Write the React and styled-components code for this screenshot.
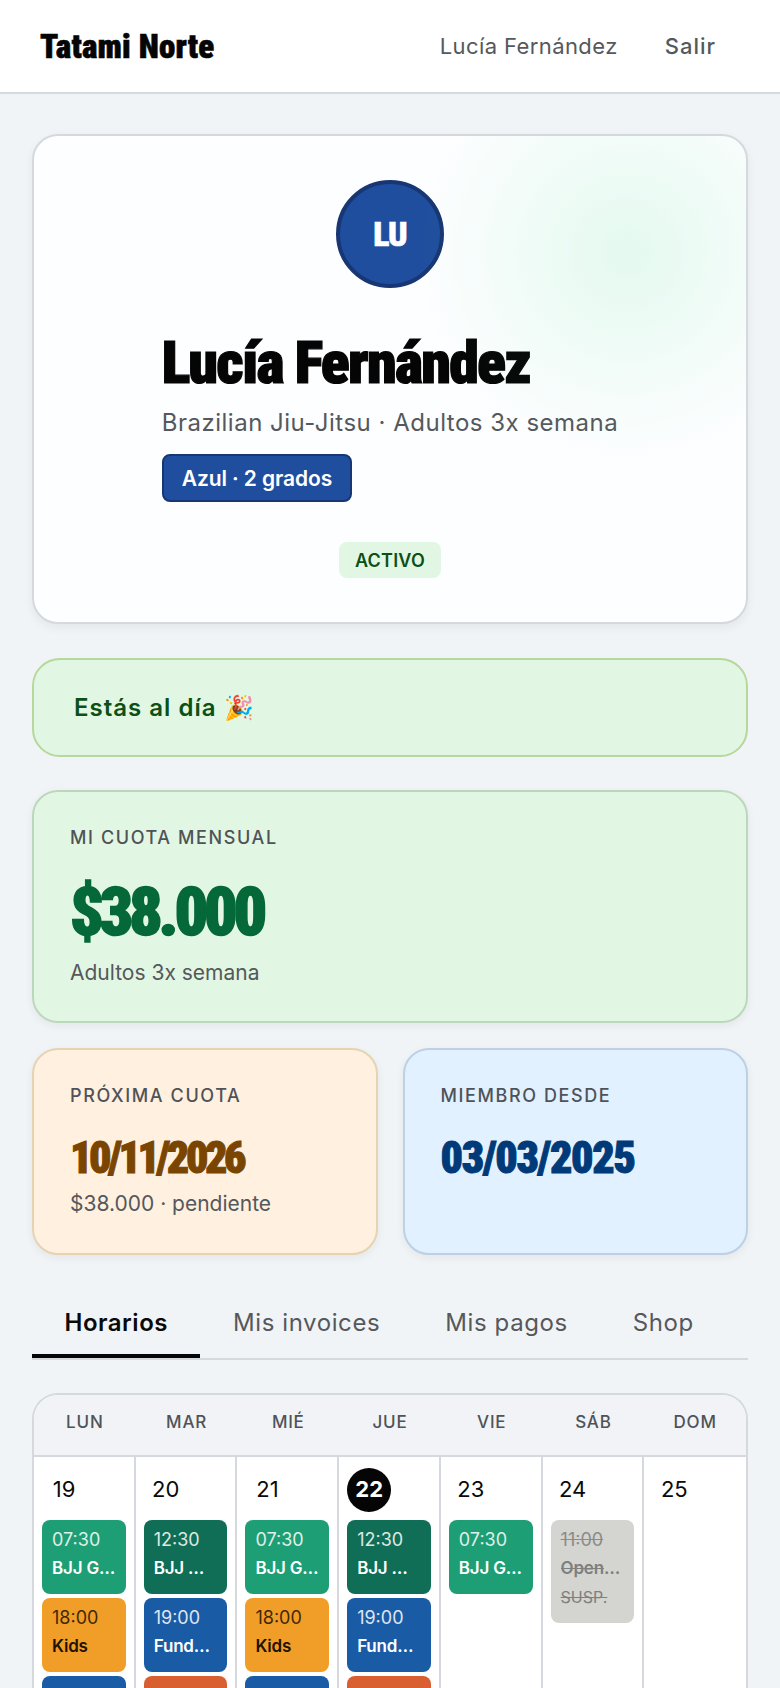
import React from "react";
import styled, { createGlobalStyle } from "styled-components";

const GlobalStyle = createGlobalStyle`
  * { box-sizing: border-box; }
  html, body {
    margin: 0;
    height: 1688px;
    overflow: hidden;
    background: #f1f4f6;
    font-family: "Inter", "Liberation Sans", sans-serif;
    color: #0a0a0a;
  }
`;

const display = `
  font-family: "Roboto", "Liberation Sans Narrow", sans-serif;
  font-stretch: 75%;
  font-weight: 900;
`;

const Nav = styled.header`
  height: 94px;
  background: #fff;
  border-bottom: 2px solid #d5d9de;
  padding: 0 64px 0 40px;
  display: flex;
  align-items: center;
  justify-content: space-between;
`;

const Brand = styled.div`
  ${display}
  font-size: 33px;
  letter-spacing: 0.2px;
  -webkit-text-stroke: 0.6px #050505;
  color: #050505;
`;

const NavLinks = styled.nav`
  display: flex;
  align-items: center;
  gap: 47px;
  font-size: 22px;
  color: #55585c;
`;

const NavName = styled.span`
  letter-spacing: 0.4px;
`;

const NavButton = styled.span`
  font-weight: 500;
  letter-spacing: 1px;
`;

const Main = styled.main`
  padding: 40px 32px 0;
  display: flex;
  flex-direction: column;
`;

const ProfileCard = styled.section`
  position: relative;
  overflow: hidden;
  height: 490px;
  background: #fdfeff;
  border: 2px solid #d5d9de;
  border-radius: 26px;
  box-shadow: 0 4px 10px rgba(20, 30, 40, 0.06);
  padding: 44px;
  display: flex;
  flex-direction: column;
  align-items: center;
  &::after {
    content: "";
    position: absolute;
    top: -95px;
    right: -93px;
    width: 424px;
    height: 424px;
    background: radial-gradient(circle, rgba(50, 215, 130, 0.12), rgba(50, 215, 130, 0) 70%);
    pointer-events: none;
  }
`;

const Avatar = styled.div`
  ${display}
  width: 108px;
  height: 108px;
  flex: none;
  border-radius: 50%;
  background: #1f4e9e;
  border: 4px solid #173673;
  color: #fff;
  font-size: 34px;
  letter-spacing: -1px;
  -webkit-text-stroke: 0.5px #fff;
  display: flex;
  align-items: center;
  justify-content: center;
`;

const Identity = styled.div`
  margin-top: 40px;
  display: flex;
  flex-direction: column;
  align-items: flex-start;
`;

const Name = styled.h1`
  ${display}
  margin: 0;
  font-size: 60px;
  line-height: 70px;
  letter-spacing: -1.8px;
  -webkit-text-stroke: 1.2px #050505;
  color: #050505;
`;

const Discipline = styled.p`
  margin: 9px 0 1px;
  font-size: 24px;
  line-height: 32px;
  letter-spacing: 0.5px;
  color: #55585c;
`;

const Belt = styled.div`
  margin-top: 14px;
  height: 48px;
  padding: 0 18px;
  background: #1f4e9e;
  border: 2px solid #173673;
  border-radius: 8px;
  color: #fff;
  font-size: 21px;
  font-weight: 600;
  letter-spacing: -0.1px;
  display: flex;
  align-items: center;
`;

const Status = styled.div`
  margin-top: 40px;
  height: 38px;
  padding: 0 16px;
  background: #e2f7e3;
  border-radius: 8px;
  color: #0d5016;
  font-size: 18px;
  font-weight: 600;
  letter-spacing: 0.2px;
  display: flex;
  align-items: center;
`;

const Alert = styled.div`
  margin-top: 34px;
  height: 99px;
  padding: 0 40px;
  background: #e2f7e3;
  border: 2px solid #b6d89b;
  border-radius: 28px;
  color: #0d5016;
  font-size: 24px;
  font-weight: 600;
  letter-spacing: 1px;
  display: flex;
  align-items: center;
`;

const StatCard = styled.div`
  height: ${(p) => p.$height}px;
  padding: 34px 36px 0;
  background: ${(p) => p.$bg};
  border: 2px solid ${(p) => p.$line};
  border-radius: 26px;
  box-shadow: 0 3px 8px rgba(20, 30, 40, 0.06);
`;

const FeeCard = styled(StatCard)`
  margin-top: 33px;
`;

const StatRow = styled.div`
  margin-top: 25px;
  display: grid;
  grid-template-columns: 1fr 1fr;
  gap: 25px;
`;

const StatLabel = styled.div`
  font-size: 18px;
  line-height: 24px;
  font-weight: 500;
  letter-spacing: 1.6px;
  color: #4f5358;
`;

const FeeValue = styled.div`
  ${display}
  margin-top: 23px;
  font-size: 66px;
  line-height: 80px;
  letter-spacing: -4.2px;
  -webkit-text-stroke: 1.5px #056838;
  color: #056838;
`;

const DateValue = styled.div`
  ${display}
  margin-top: 22px;
  font-size: 44px;
  line-height: 56px;
  letter-spacing: ${(p) => p.$tracking}px;
  -webkit-text-stroke: 1px ${(p) => p.$color};
  color: ${(p) => p.$color};
`;

const StatNote = styled.div`
  margin-top: ${(p) => p.$top}px;
  font-size: 21px;
  line-height: 28px;
  color: #55585c;
`;

const Tabs = styled.div`
  margin-top: 33px;
  height: 72px;
  border-bottom: 2px solid #d5d9de;
  display: flex;
`;

const Tab = styled.div`
  height: 70px;
  padding: 2px 32.5px 0;
  border-bottom: 4px solid ${(p) => (p.$active ? "#050505" : "transparent")};
  color: ${(p) => (p.$active ? "#0a0a0a" : "#55585c")};
  font-size: 24px;
  font-weight: ${(p) => (p.$active ? 600 : 400)};
  letter-spacing: ${(p) => (p.$active ? 0.5 : 0.6)}px;
  display: flex;
  align-items: center;
`;

const Calendar = styled.section`
  margin-top: 33px;
  border: 2px solid #d5d9de;
  border-bottom: 0;
  border-radius: 26px 26px 0 0;
  overflow: hidden;
  background: #fff;
`;

const WeekHead = styled.div`
  height: 62px;
  background: #f1f3f6;
  border-bottom: 2px solid #d5d9de;
  display: grid;
  grid-template-columns: repeat(7, 1fr);
`;

const WeekDay = styled.div`
  padding-bottom: 7px;
  display: flex;
  align-items: center;
  justify-content: center;
  font-size: 17px;
  font-weight: 500;
  letter-spacing: 0.8px;
  color: #4f5358;
`;

const Days = styled.div`
  display: grid;
  grid-template-columns: repeat(7, 1fr);
  height: 240px;
`;

const Day = styled.div`
  padding: 11px 8px 0;
  border-right: 2px solid #d5d9de;
  min-width: 0;
  display: flex;
  flex-direction: column;
  gap: 4px;
  &:last-child {
    border-right: 0;
  }
`;

const DayNumber = styled.div`
  width: 44px;
  height: 44px;
  flex: none;
  margin-bottom: 4px;
  padding-bottom: 3px;
  border-radius: 50%;
  background: ${(p) => (p.$today ? "#050505" : "transparent")};
  color: ${(p) => (p.$today ? "#fff" : "#0a0a0a")};
  font-size: 22px;
  font-weight: ${(p) => (p.$today ? 700 : 400)};
  display: flex;
  align-items: center;
  justify-content: center;
`;

const tones = {
  gi: { bg: "#1e9e74", fg: "#fff" },
  mid: { bg: "#0f6e55", fg: "#fff" },
  fund: { bg: "#1a5ba6", fg: "#fff" },
  kids: { bg: "#f09e28", fg: "#1f1200" },
  open: { bg: "#d95f30", fg: "#fff" },
  off: { bg: "#d4d4d0", fg: "#7f7f7d" },
};

const Event = styled.div`
  flex: none;
  padding: 5px 10px 11px;
  border-radius: 8px;
  background: ${(p) => tones[p.$tone].bg};
  color: ${(p) => tones[p.$tone].fg};
  text-decoration: ${(p) => (p.$tone === "off" ? "line-through" : "none")};
  min-width: 0;
`;

const EventTime = styled.div`
  font-size: 18px;
  line-height: 29px;
  opacity: 0.85;
`;

const EventTitle = styled.div`
  font-size: 17px;
  line-height: 29px;
  font-weight: 600;
  letter-spacing: -0.2px;
  white-space: nowrap;
  overflow: hidden;
  text-overflow: ellipsis;
`;

const EventNote = styled.div`
  font-size: 16px;
  line-height: 29px;
`;

const week = [
  { label: "LUN", num: 19, events: [["gi", "07:30", "BJJ Gi Adultos"], ["kids", "18:00", "Kids"], ["fund", "19:00", "Fundamentos"]] },
  { label: "MAR", num: 20, events: [["mid", "12:30", "BJJ Mediodía"], ["fund", "19:00", "Fundamentos"], ["open", "20:15", "Openmat"]] },
  { label: "MIÉ", num: 21, events: [["gi", "07:30", "BJJ Gi Adultos"], ["kids", "18:00", "Kids"], ["fund", "19:00", "Fundamentos"]] },
  { label: "JUE", num: 22, today: true, events: [["mid", "12:30", "BJJ Mediodía"], ["fund", "19:00", "Fundamentos"], ["open", "20:15", "Openmat"]] },
  { label: "VIE", num: 23, events: [["gi", "07:30", "BJJ Gi Adultos"]] },
  { label: "SÁB", num: 24, events: [["off", "11:00", "Openmat", "SUSP."]] },
  { label: "DOM", num: 25, events: [] },
];

export default function App() {
  return (
    <>
      <GlobalStyle />
      <Nav>
        <Brand>Tatami Norte</Brand>
        <NavLinks>
          <NavName>Lucía Fernández</NavName>
          <NavButton>Salir</NavButton>
        </NavLinks>
      </Nav>
      <Main>
        <ProfileCard>
          <Avatar>LU</Avatar>
          <Identity>
            <Name>Lucía Fernández</Name>
            <Discipline>Brazilian Jiu-Jitsu · Adultos 3x semana</Discipline>
            <Belt>Azul · 2 grados</Belt>
          </Identity>
          <Status>ACTIVO</Status>
        </ProfileCard>

        <Alert>Estás al día 🎉</Alert>

        <FeeCard $height={233} $bg="#e2f7e3" $line="#bcd8bc">
          <StatLabel>MI CUOTA MENSUAL</StatLabel>
          <FeeValue>$38.000</FeeValue>
          <StatNote $top={6}>Adultos 3x semana</StatNote>
        </FeeCard>

        <StatRow>
          <StatCard $height={207} $bg="#fff0df" $line="#e6d3b2">
            <StatLabel>PRÓXIMA CUOTA</StatLabel>
            <DateValue $color="#7a4500" $tracking={-3.4}>10/11/2026</DateValue>
            <StatNote $top={4}>$38.000 · pendiente</StatNote>
          </StatCard>
          <StatCard $height={207} $bg="#e1f1ff" $line="#bdd0e4">
            <StatLabel>MIEMBRO DESDE</StatLabel>
            <DateValue $color="#003a78" $tracking={-1.3}>03/03/2025</DateValue>
          </StatCard>
        </StatRow>

        <Tabs>
          <Tab $active>Horarios</Tab>
          <Tab>Mis invoices</Tab>
          <Tab>Mis pagos</Tab>
          <Tab>Shop</Tab>
        </Tabs>

        <Calendar>
          <WeekHead>
            {week.map((d) => (
              <WeekDay key={d.label}>{d.label}</WeekDay>
            ))}
          </WeekHead>
          <Days>
            {week.map((d) => (
              <Day key={d.num}>
                <DayNumber $today={d.today}>{d.num}</DayNumber>
                {d.events.map(([tone, time, title, note]) => (
                  <Event key={time} $tone={tone}>
                    <EventTime>{time}</EventTime>
                    <EventTitle>{title}</EventTitle>
                    {note && <EventNote>{note}</EventNote>}
                  </Event>
                ))}
              </Day>
            ))}
          </Days>
        </Calendar>
      </Main>
    </>
  );
}
